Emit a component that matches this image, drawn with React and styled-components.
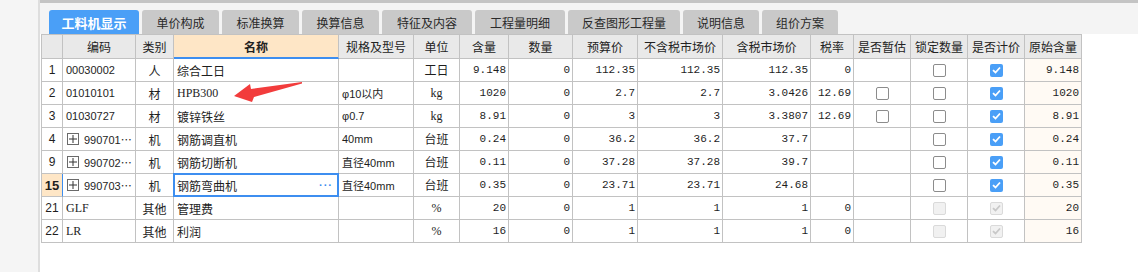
import React from 'react';
import styled, { createGlobalStyle, css } from 'styled-components';

const GlobalStyle = createGlobalStyle`
  html, body {
    margin: 0;
    padding: 0;
    background: #ffffff;
  }
  body {
    font-family: 'Noto Sans CJK SC', 'Liberation Sans', sans-serif;
    color: #1e1e1e;
  }
`;

const COLS = [21, 73, 38, 165, 75, 46, 49, 64, 65, 85, 88, 43, 57, 57, 57, 57];
const LINE = '#c2c2c2';
const BLUE = '#3d8ef0';

const tabs = [
  { label: '工料机显示', w: 90 },
  { label: '单价构成', w: 77 },
  { label: '标准换算', w: 77 },
  { label: '换算信息', w: 77 },
  { label: '特征及内容', w: 90 },
  { label: '工程量明细', w: 90 },
  { label: '反查图形工程量', w: 112 },
  { label: '说明信息', w: 76 },
  { label: '组价方案', w: 76 },
];

const heads = [
  '', '编码', '类别', '名称', '规格及型号', '单位', '含量', '数量', '预算价',
  '不含税市场价', '含税市场价', '税率', '是否暂估', '锁定数量', '是否计价', '原始含量',
];

const rows = [
  { no: '1', code: '00030002', type: '人', name: '综合工日', spec: '', unit: '工日', qty: '9.148', amount: '0', budget: '112.35', noTax: '112.35', tax: '112.35', rate: '0', est: null, lock: 'off', price: 'on', orig: '9.148' },
  { no: '2', code: '01010101', type: '材', name: 'HPB300', latinName: true, spec: 'φ10以内', unit: 'kg', qty: '1020', amount: '0', budget: '2.7', noTax: '2.7', tax: '3.0426', rate: '12.69', est: 'off', lock: 'off', price: 'on', orig: '1020' },
  { no: '3', code: '01030727', type: '材', name: '镀锌铁丝', spec: 'φ0.7', unit: 'kg', qty: '8.91', amount: '0', budget: '3', noTax: '3', tax: '3.3807', rate: '12.69', est: 'off', lock: 'off', price: 'on', orig: '8.91' },
  { no: '4', code: '990701⋯', tree: true, type: '机', name: '钢筋调直机', spec: '40mm', unit: '台班', qty: '0.24', amount: '0', budget: '36.2', noTax: '36.2', tax: '37.7', rate: '', est: null, lock: 'off', price: 'on', orig: '0.24' },
  { no: '9', code: '990702⋯', tree: true, type: '机', name: '钢筋切断机', spec: '直径40mm', unit: '台班', qty: '0.11', amount: '0', budget: '37.28', noTax: '37.28', tax: '39.7', rate: '', est: null, lock: 'off', price: 'on', orig: '0.11' },
  { no: '15', code: '990703⋯', tree: true, active: true, type: '机', name: '钢筋弯曲机', spec: '直径40mm', unit: '台班', qty: '0.35', amount: '0', budget: '23.71', noTax: '23.71', tax: '24.68', rate: '', est: null, lock: 'off', price: 'on', orig: '0.35' },
  { no: '21', code: 'GLF', latinCode: true, type: '其他', name: '管理费', spec: '', unit: '%', qty: '20', amount: '0', budget: '1', noTax: '1', tax: '1', rate: '0', est: null, lock: 'dis', price: 'disOn', orig: '20' },
  { no: '22', code: 'LR', latinCode: true, type: '其他', name: '利润', spec: '', unit: '%', qty: '16', amount: '0', budget: '1', noTax: '1', tax: '1', rate: '0', est: null, lock: 'dis', price: 'disOn', orig: '16' },
];

const Page = styled.div`
  display: flex;
  height: 272px;
`;

const Sidebar = styled.aside`
  width: 38px;
  flex: none;
  background: #f5f5f5;
  border-right: 2px solid #dedede;
`;

const Main = styled.main`
  flex: 1;
  display: flex;
  flex-direction: column;
  background: #ffffff;
`;

const TopBar = styled.div`
  height: 3px;
  background: #c4c4c4;
`;

const TabStrip = styled.nav`
  height: 31px;
  background: #f4f4f4;
  display: flex;
  align-items: flex-end;
  gap: 3px;
  padding-left: 9px;
`;

const Tab = styled.div`
  width: ${p => p.$w}px;
  height: 24px;
  box-sizing: border-box;
  display: flex;
  align-items: center;
  justify-content: center;
  border-radius: 3px 3px 0 0;
  font-size: 12px;
  color: #2a2a2a;
  background: #c9c9c9;
  ${p => p.$active && css`
    background: #4a9ff7;
    color: #ffffff;
    font-weight: 700;
    font-size: 13px;
  `}
`;

const TableWrap = styled.div`
  position: relative;
  margin-left: 1px;
  width: max-content;
`;

const Grid = styled.div`
  display: grid;
  grid-template-columns: ${COLS.map(c => c + 'px').join(' ')};
  border-left: 1px solid ${LINE};
  border-top: 1px solid ${LINE};
`;

const Cell = styled.div`
  position: relative;
  box-sizing: border-box;
  height: 23px;
  border-right: 1px solid ${LINE};
  border-bottom: 1px solid ${LINE};
  display: flex;
  align-items: center;
  justify-content: ${p => (p.$align === 'right' ? 'flex-end' : p.$align === 'center' ? 'center' : 'flex-start')};
  padding: 0 ${p => (p.$align === 'right' ? '2px' : '3px')};
  font-size: 12px;
  white-space: nowrap;
  overflow: hidden;
  background: ${p => p.$bg || '#ffffff'};
  ${p => p.$num && css`
    font-family: 'Liberation Mono', monospace;
    font-size: 11px;
  `}
  ${p => p.$latin && css`
    font-family: 'Liberation Serif', 'Noto Sans CJK SC', serif;
    font-size: 12px;
  `}
  ${p => p.$sans && css`
    font-family: 'Liberation Sans', 'Noto Sans CJK SC', sans-serif;
    font-size: 11px;
  `}
`;

const HeadCell = styled(Cell)`
  height: 24px;
  justify-content: center;
  background: #e9e9e9;
  color: #222;
  ${p => p.$focus && css`
    background: #fee6c6;
    font-weight: 700;
    border-bottom: 2px solid ${BLUE};
  `}
`;

const RowNo = styled(Cell)`
  justify-content: center;
  padding: 0;
  font-family: 'Liberation Sans', sans-serif;
  font-size: 12px;
  ${p => p.$active && css`
    background: #fee6c6;
    font-weight: 700;
    font-size: 13px;
    border-right-color: ${BLUE};
  `}
`;

const SelectedCell = styled(Cell)`
  overflow: visible;
  &::after {
    content: '';
    position: absolute;
    top: -1px;
    left: -1px;
    right: -1px;
    bottom: -1px;
    border: 2px solid ${BLUE};
    pointer-events: none;
  }
`;

const MoreDots = styled.span`
  margin-left: auto;
  margin-right: 2px;
  color: ${BLUE};
  font-family: 'Liberation Sans', sans-serif;
  font-weight: 700;
  font-size: 11px;
  letter-spacing: 1px;
`;

const PlusBox = styled.span`
  width: 12px;
  height: 12px;
  box-sizing: border-box;
  border: 1px solid #6a6a6a;
  margin: 0 5px 0 1px;
  flex: none;
  display: flex;
  align-items: center;
  justify-content: center;
`;

const Box = styled.span`
  width: 13px;
  height: 13px;
  box-sizing: border-box;
  border-radius: 2px;
  display: flex;
  align-items: center;
  justify-content: center;
  ${p => p.$kind === 'off' && css`
    border: 1px solid #8c8c8c;
    background: #fff;
  `}
  ${p => p.$kind === 'on' && css`
    background: #4a9ff7;
  `}
  ${p => (p.$kind === 'dis' || p.$kind === 'disOn') && css`
    border: 1px solid #dadada;
    background: #f1f1f1;
  `}
`;

const ArrowMark = styled.svg`
  position: absolute;
  left: 191px;
  top: 46px;
`;

const Check = ({ kind }) => (
  <Box $kind={kind}>
    {(kind === 'on' || kind === 'disOn') && (
      <svg width="9" height="8" viewBox="0 0 9 8">
        <path d="M1 4.2 L3.5 6.5 L8 1.5" fill="none" stroke={kind === 'on' ? '#fff' : '#c8c8c8'} strokeWidth="1.8" />
      </svg>
    )}
  </Box>
);

const Row = ({ r }) => {
  const NameCell = r.active ? SelectedCell : Cell;
  return (
    <>
      <RowNo $active={r.active}>{r.no}</RowNo>
      <Cell $latin={r.latinCode} $sans={!r.latinCode}>
        {r.tree && (
          <PlusBox>
            <svg width="8" height="8" viewBox="0 0 8 8">
              <path d="M0 4 H8 M4 0 V8" stroke="#333" strokeWidth="1" />
            </svg>
          </PlusBox>
        )}
        {r.code}
      </Cell>
      <Cell $align="center">{r.type}</Cell>
      <NameCell $latin={r.latinName}>
        {r.name}
        {r.active && <MoreDots>···</MoreDots>}
      </NameCell>
      <Cell $sans>{r.spec}</Cell>
      <Cell $align="center" $latin>{r.unit}</Cell>
      <Cell $align="right" $num>{r.qty}</Cell>
      <Cell $align="right" $num>{r.amount}</Cell>
      <Cell $align="right" $num>{r.budget}</Cell>
      <Cell $align="right" $num>{r.noTax}</Cell>
      <Cell $align="right" $num>{r.tax}</Cell>
      <Cell $align="right" $num>{r.rate}</Cell>
      <Cell $align="center">{r.est && <Check kind={r.est} />}</Cell>
      <Cell $align="center"><Check kind={r.lock} /></Cell>
      <Cell $align="center"><Check kind={r.price} /></Cell>
      <Cell $align="right" $num $bg="#fffaf4">{r.orig}</Cell>
    </>
  );
};

export default function App() {
  return (
    <>
      <GlobalStyle />
      <Page>
        <Sidebar />
        <Main>
          <TopBar />
          <TabStrip>
            {tabs.map((t, i) => (
              <Tab key={t.label} $w={t.w} $active={i === 0}>{t.label}</Tab>
            ))}
          </TabStrip>
          <TableWrap>
            <Grid>
              {heads.map((h, i) => (
                <HeadCell key={i} $focus={h === '名称'}>{h}</HeadCell>
              ))}
              {rows.map(r => (
                <Row key={r.no} r={r} />
              ))}
            </Grid>
            <ArrowMark width="72" height="24" viewBox="0 0 72 24">
              <polygon points="2,16 18,4 19,9 70,2 70,3.5 22,17 20,22" fill="#f23c3c" />
            </ArrowMark>
          </TableWrap>
        </Main>
      </Page>
    </>
  );
}
